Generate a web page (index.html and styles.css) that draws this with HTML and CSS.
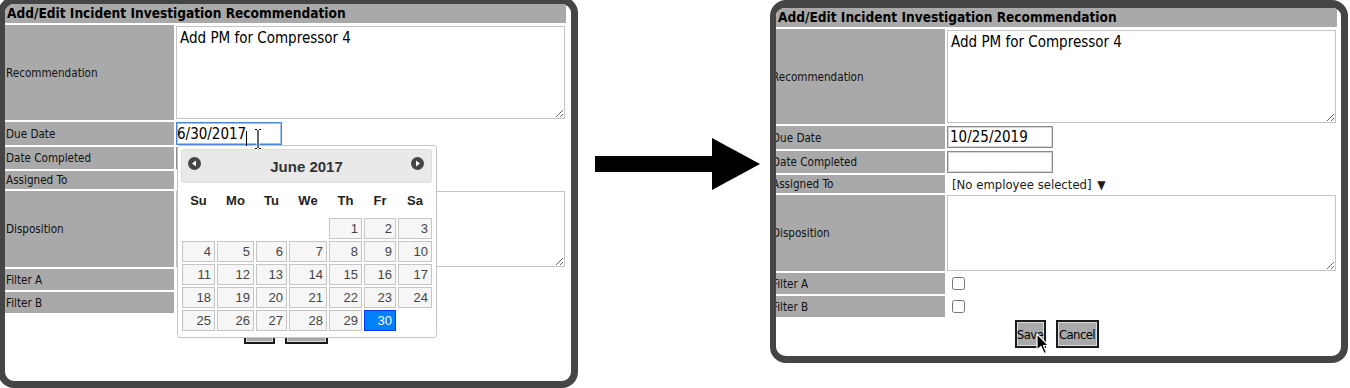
FILE: index.html
```html
<!DOCTYPE html>
<html lang="en">
<head>
    <meta charset="UTF-8">
    <meta name="viewport" content="width=device-width, initial-scale=1.0">
    <title>Add/Edit Incident Investigation Recommendation</title>
    <link rel="stylesheet" href="styles.css">
</head>
<body>
    <div class="page">
        <!-- before: due date picker open -->
        <div class="frame frame-left">
            <div class="form">
                <div class="form-title">Add/Edit Incident Investigation Recommendation</div>
                <div class="label">Recommendation</div>
                <div class="value"><textarea class="area area-tall">Add PM for Compressor 4</textarea></div>
                <div class="label">Due Date</div>
                <div class="value"><input class="date date-focus" type="text" value="6/30/2017"></div>
                <div class="label">Date Completed</div>
                <div class="value"><input class="date" type="text"></div>
                <div class="label">Assigned To</div>
                <div class="value"><span class="select">[No employee selected] <span class="caret-down">▼</span></span></div>
                <div class="label">Disposition</div>
                <div class="value"><textarea class="area area-short"></textarea></div>
                <div class="label">Filter A</div>
                <div class="value"><input class="check" type="checkbox"></div>
                <div class="label">Filter B</div>
                <div class="value"><input class="check" type="checkbox"></div>
            </div>
            <div class="actions">
                <button class="btn btn-save">Save</button>
                <button class="btn btn-cancel">Cancel</button>
            </div>

            <div class="datepicker">
                <div class="dp-header">
                    <span class="dp-nav dp-prev">
                        <svg width="13" height="13" viewBox="0 0 13 13"><circle cx="6.5" cy="6.5" r="6.5" fill="#454545"/><path d="M4 6.5 L8 3.5 L8 9.5 Z" fill="#fff"/></svg>
                    </span>
                    <span class="dp-title">June 2017</span>
                    <span class="dp-nav dp-next">
                        <svg width="13" height="13" viewBox="0 0 13 13"><circle cx="6.5" cy="6.5" r="6.5" fill="#454545"/><path d="M9 6.5 L5 3.5 L5 9.5 Z" fill="#fff"/></svg>
                    </span>
                </div>
                <div class="dp-grid">
                    <div class="dp-dow">Su</div><div class="dp-dow">Mo</div><div class="dp-dow">Tu</div><div class="dp-dow">We</div><div class="dp-dow">Th</div><div class="dp-dow">Fr</div><div class="dp-dow">Sa</div>

                    <div></div><div></div><div></div><div></div>
                    <div class="dp-day">1</div><div class="dp-day">2</div><div class="dp-day">3</div>

                    <div class="dp-day">4</div><div class="dp-day">5</div><div class="dp-day">6</div><div class="dp-day">7</div><div class="dp-day">8</div><div class="dp-day">9</div><div class="dp-day">10</div>
                    <div class="dp-day">11</div><div class="dp-day">12</div><div class="dp-day">13</div><div class="dp-day">14</div><div class="dp-day">15</div><div class="dp-day">16</div><div class="dp-day">17</div>
                    <div class="dp-day">18</div><div class="dp-day">19</div><div class="dp-day">20</div><div class="dp-day">21</div><div class="dp-day">22</div><div class="dp-day">23</div><div class="dp-day">24</div>
                    <div class="dp-day">25</div><div class="dp-day">26</div><div class="dp-day">27</div><div class="dp-day">28</div><div class="dp-day">29</div><div class="dp-day dp-active">30</div><div></div>
                </div>
            </div>

            <svg class="ibeam" width="20" height="27" viewBox="0 0 20 27">
                <line x1="2.5" y1="7" x2="2.5" y2="22" stroke="#000" stroke-width="1"/>
                <path d="M11 5.5 H13 M15 5.5 H17 M14 6 V24 M11 24.5 H13 M15 24.5 H17" stroke="#fff" stroke-width="3" fill="none"/>
                <path d="M11 5.5 H13 M15 5.5 H17 M14 6 V24 M11 24.5 H13 M15 24.5 H17" stroke="#000" stroke-width="1.2" fill="none"/>
            </svg>
        </div>

        <div class="arrow">
            <svg width="192" height="60" viewBox="0 0 192 60">
                <rect x="17" y="22" width="120" height="16" fill="#000"/>
                <path d="M134 4 L182 30 L134 56 Z" fill="#000"/>
            </svg>
        </div>

        <!-- after: saved values -->
        <div class="frame frame-right">
            <div class="form">
                <div class="form-title">Add/Edit Incident Investigation Recommendation</div>
                <div class="label">Recommendation</div>
                <div class="value"><textarea class="area area-tall">Add PM for Compressor 4</textarea></div>
                <div class="label">Due Date</div>
                <div class="value"><input class="date" type="text" value="10/25/2019"></div>
                <div class="label">Date Completed</div>
                <div class="value"><input class="date" type="text"></div>
                <div class="label">Assigned To</div>
                <div class="value"><span class="select">[No employee selected] <span class="caret-down">▼</span></span></div>
                <div class="label">Disposition</div>
                <div class="value"><textarea class="area area-short"></textarea></div>
                <div class="label">Filter A</div>
                <div class="value"><input class="check" type="checkbox"></div>
                <div class="label">Filter B</div>
                <div class="value"><input class="check" type="checkbox"></div>
            </div>
            <div class="actions">
                <button class="btn btn-save">Save</button>
                <button class="btn btn-cancel">Cancel</button>
            </div>

            <svg class="pointer" width="14" height="23" viewBox="0 0 14 23">
                <path d="M1 1 L1 17 L5 13.5 L8 20.5 L10.5 19.5 L7.5 12.5 L12.5 12.5 Z" fill="#000" stroke="#fff" stroke-width="1.2" stroke-linejoin="round"/>
            </svg>
        </div>
    </div>
</body>
</html>
```

FILE: styles.css
```css
body {
    margin: 0;
    background: #fff;
    font-family: "DejaVu Sans Condensed", "DejaVu Sans", sans-serif;
    color: #111;
}
.page {
    display: flex;
    align-items: flex-start;
    width: 1350px;
    height: 388px;
    overflow: hidden;
}
.frame {
    position: relative;
    box-sizing: border-box;
    border: 7px solid #454545;
    border-radius: 16px;
    background: #fff;
    overflow: hidden;
}
.frame-left {
    width: 580px;
    height: 391px;
    margin: -3px 0 0 -2px;
}
.frame-right {
    width: 578px;
    height: 363px;
    margin-top: 0;
    border-width: 8px 7px 7px 6px;
}
.arrow {
    width: 192px;
    flex: none;
    margin-top: 134px;
}
.arrow svg {
    display: block;
}

/* form table */
.form {
    display: grid;
    grid-template-columns: 169px 390px;
    grid-template-rows: 19px 95px 23px 22px 18px 76px 21px 21px;
    gap: 2px;
}
.form-title {
    grid-column: 1 / 3;
    background: #a9a9a9;
    font-weight: bold;
    font-size: 13.6px;
    line-height: 19px;
    padding-left: 2px;
    color: #000;
}
.label {
    display: flex;
    align-items: center;
    background: #a9a9a9;
    font-size: 11.6px;
    padding-left: 1px;
    white-space: nowrap;
}
.frame-right .label {
    text-indent: -5px;
}
.value {
    display: flex;
    align-items: center;
}
.area {
    box-sizing: border-box;
    width: 389px;
    border: 1px solid #c4c4c4;
    padding: 2px 3px;
    font-family: inherit;
    font-size: 15px;
    color: #000;
    resize: vertical;
}
.area-tall {
    height: 93px;
    align-self: flex-start;
    margin-top: 1px;
}
.area-short {
    height: 76px;
}
.date {
    box-sizing: border-box;
    width: 106px;
    height: 22px;
    margin: 0;
    align-self: flex-start;
    border: 1px solid #8a8a8a;
    box-shadow: inset 0 0 0 1px #d6d6d6;
    padding: 0 2px;
    font-family: inherit;
    font-size: 15px;
    color: #000;
    outline: none;
}
.date-focus {
    height: 23px;
    padding-left: 0;
    border-color: #4a86d8;
    box-shadow: inset 0 0 0 1px #9cc0f0;
}
.select {
    font-size: 13px;
    padding-left: 5px;
    color: #1a1a1a;
    white-space: nowrap;
}
.caret-down {
    font-size: 12px;
    margin-left: 2px;
}
.check {
    width: 13px;
    height: 13px;
    margin: 0 0 0 5px;
}
.actions {
    width: 561px;
    display: flex;
    justify-content: center;
    gap: 10px;
    margin-top: 3px;
}
.btn {
    box-sizing: border-box;
    height: 28px;
    padding: 0;
    background: #a9a9a9;
    border: 2px solid #1c1c1c;
    box-shadow: inset 0 0 0 1px #dcdcdc;
    font-family: inherit;
    font-size: 13px;
    letter-spacing: -0.6px;
    color: #000;
}
.btn-save {
    width: 31px;
}
.btn-cancel {
    width: 43px;
}

/* overlays */
.ibeam {
    position: absolute;
    left: 239px;
    top: 120px;
}
.pointer {
    position: absolute;
    left: 260px;
    top: 325px;
}

/* date picker popup */
.datepicker {
    position: absolute;
    left: 172px;
    top: 141px;
    width: 260px;
    height: 193px;
    box-sizing: border-box;
    padding: 3px 3px 0;
    background: #fff;
    border: 1px solid #c5c5c5;
    border-radius: 3px;
    font-family: "Liberation Sans", Arial, sans-serif;
}
.dp-header {
    position: relative;
    box-sizing: border-box;
    height: 34px;
    width: 251px;
    background: #e9e9e9;
    border: 1px solid #dddddd;
    border-radius: 3px;
    display: flex;
    justify-content: center;
    align-items: center;
}
.dp-title {
    font-weight: bold;
    font-size: 15px;
    color: #333;
}
.dp-nav {
    position: absolute;
    top: 7px;
    width: 13px;
    height: 13px;
}
.dp-nav svg {
    display: block;
}
.dp-prev {
    left: 6px;
}
.dp-next {
    right: 7px;
}
.dp-grid {
    display: grid;
    grid-template-columns: 35px 39px 33px 40px 35px 34px 36px;
    grid-template-rows: 34px repeat(5, 23px);
}
.dp-dow {
    display: flex;
    align-items: center;
    justify-content: center;
    font-weight: bold;
    font-size: 13px;
    color: #222;
}
.dp-day {
    margin: 1px;
    box-sizing: border-box;
    background: #f6f6f6;
    border: 1px solid #c5c5c5;
    color: #454545;
    font-size: 13px;
    line-height: 19px;
    text-align: right;
    padding-right: 3px;
}
.dp-active {
    background: #007fff;
    border-color: #003eff;
    color: #fff;
}
```
